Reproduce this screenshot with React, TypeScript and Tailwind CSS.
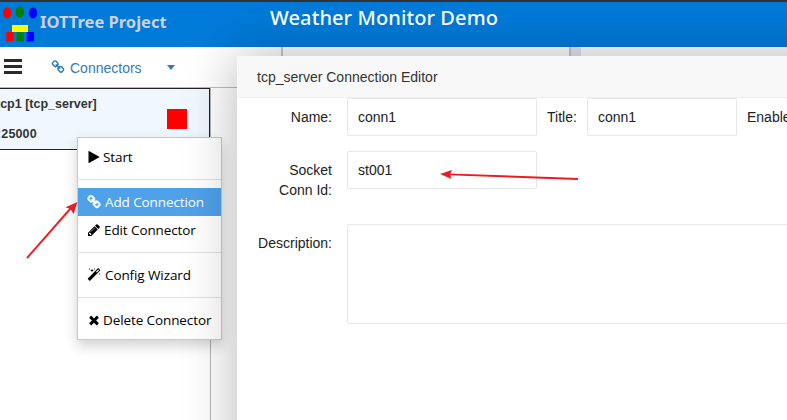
import React from "react";

const ICONS = {
  link: "M1520 1216q0-40-28-68l-208-208q-28-28-68-28-42 0-72 32 3 3 19 18.5t21.5 21.5 15 19 13 25.5 3.5 27.5q0 40-28 68t-68 28q-15 0-27.5-3.5t-25.5-13-19-15-21.5-21.5-18.5-19q-33 31-33 73 0 40 28 68l206 207q27 27 68 27 40 0 68-26l147-146q28-28 28-67zm-703-705q0-40-28-68l-206-207q-28-28-68-28-39 0-68 27l-147 146q-28 28-28 67 0 40 28 68l208 208q27 27 68 27 42 0 72-31-3-3-19-18.5t-21.5-21.5-15-19-13-25.5-3.5-27.5q0-40 28-68t68-28q15 0 27.5 3.5t25.5 13 19 15 21.5 21.5 18.5 19q33-31 33-73zm895 705q0 120-85 203l-147 146q-83 83-203 83-121 0-204-85l-206-207q-83-83-83-203 0-123 88-209l-88-88q-86 88-208 88-120 0-204-84l-208-208q-84-84-84-204t85-203l147-146q83-83 203-83 121 0 204 85l206 207q83 83 83 203 0 123-88 209l88 88q86-88 208-88 120 0 204 84l208 208q84 84 84 204z",
  pencil: "M491 1536l91-91-235-235-91 91v107h128v128h107zm523-928q0-22-22-22-10 0-17 7l-542 542q-7 7-7 17 0 22 22 22 10 0 17-7l542-542q7-7 7-17zm-54-192l416 416-832 832h-416v-416zm683 96q0 53-37 90l-166 166-416-416 166-165q36-38 90-38 53 0 91 38l235 234q37 39 37 91z",
  times: "M1490 1322q0 40-28 68l-136 136q-28 28-68 28t-68-28l-294-294-294 294q-28 28-68 28t-68-28l-136-136q-28-28-28-68t28-68l294-294-294-294q-28-28-28-68t28-68l136-136q28-28 68-28t68 28l294 294 294-294q28-28 68-28t68 28l136 136q28 28 28 68t-28 68l-294 294 294 294q28 28 28 68z",
  play: "M1576 927l-1328 738q-23 13-39.5 3t-16.5-36v-1472q0-26 16.5-36t39.5 3l1328 738q23 13 23 31t-23 31z",
  magic: "M1254 581l293-293-107-107-293 293zm447-293q0 27-18 45l-1286 1286q-18 18-45 18t-45-18l-198-198q-18-18-18-45t18-45l1286-1286q18-18 45-18t45 18l198 198q18 18 18 45zm-1351-190l98 30-98 30-30 98-30-98-98-30 98-30 30-98zm350 162l196 60-196 60-60 196-60-196-196-60 196-60 60-196zm930 478l98 30-98 30-30 98-30-98-98-30 98-30 30-98zm-640-640l98 30-98 30-30 98-30-98-98-30 98-30 30-98z",
};

function Icon({ name, className = "" }: { name: keyof typeof ICONS; className?: string }) {
  return (
    <svg viewBox="0 0 1792 1792" fill="currentColor" className={`size-[14px] shrink-0 ${className}`}>
      <path d={ICONS[name]} />
    </svg>
  );
}

function Logo() {
  return (
    <svg viewBox="0 0 36 38" className="ml-[2px] mt-[3px] h-[38px] w-[36px] shrink-0">
      <g stroke="#3d7f9c" strokeWidth="0.7" fill="none">
        <path d="M9 11l3 12M18 10v14M28 12l-4 10" />
      </g>
      <ellipse cx="5.3" cy="8" rx="4.2" ry="5.4" fill="#f00" />
      <ellipse cx="17.8" cy="7" rx="4.2" ry="5.5" fill="#008000" />
      <ellipse cx="31" cy="8" rx="4.2" ry="5.4" fill="#00f" />
      <rect x="4.3" y="27" width="7.4" height="9.5" fill="#f00" />
      <rect x="14.5" y="27" width="7.4" height="9.5" fill="#008000" />
      <rect x="24.7" y="27" width="7.4" height="9.5" fill="#00f" />
      <rect x="10" y="20" width="16" height="7" fill="#ff0" />
    </svg>
  );
}

function Header() {
  return (
    <header className="flex h-[47px] shrink-0 border-t-2 border-[#2f3438] bg-[#007ad9] font-['Noto_Sans',sans-serif]">
      <Logo />
      <div className="ml-[2px] w-[230px] shrink-0 pt-[8px] text-[16.5px] leading-[24px] font-bold text-[#cfd0da]">
        IOTTree Project
      </div>
      <div className="pt-[2px] text-[20px] leading-[28px] font-medium tracking-[0.1px] whitespace-nowrap text-white">Weather Monitor Demo</div>
    </header>
  );
}

function Toolbar() {
  return (
    <div className="flex h-[41px] w-[281px] shrink-0 items-center border-b border-[#bbb] pb-px text-[#337ab7]">
      <div className="ml-1 flex w-[18px] flex-col gap-[3px]">
        <span className="h-[3px] bg-[#2b2b2b]" />
        <span className="h-[3px] bg-[#2b2b2b]" />
        <span className="h-[3px] bg-[#2b2b2b]" />
      </div>
      <Icon name="link" className="ml-[29px]" />
      <span className="ml-[5px] pt-[3px] text-sm leading-5">Connectors</span>
      <span className="mt-[2px] ml-[25px] border-x-[4.5px] border-t-[5px] border-x-transparent border-t-[#337ab7]" />
    </div>
  );
}

function ConnectorCard() {
  return (
    <div className="flex h-[62px] w-[210px] justify-between border border-l-0 border-[#222] bg-[#f0f7ff] text-[12.5px] font-bold text-[#333]">
      <div className="-ml-[4px] whitespace-nowrap">
        <div className="pt-[5px] leading-[20px]">tcp1 [tcp_server]</div>
        <div className="ml-px pt-[10px] leading-[20px] tracking-[0.15px]">:25000</div>
      </div>
      <div className="mt-[20px] mr-[22px] size-[20px] bg-[#f00]" />
    </div>
  );
}

function MenuItem({ icon, label, active = false, gap = "ml-[3px]" }: { icon: keyof typeof ICONS; label: string; active?: boolean; gap?: string }) {
  return (
    <div className={`flex h-[28px] items-center pl-[9px] ${active ? "bg-[#4fa1ea] text-white" : "text-black"}`}>
      <Icon name={icon} className={active ? "stroke-current [stroke-width:90]" : ""} />
      <span className={`whitespace-nowrap ${gap}`}>{label}</span>
    </div>
  );
}

function Separator() {
  return <div className="my-[8px] h-px bg-[#e2e2e2]" />;
}

function ContextMenu() {
  return (
    <div className="absolute top-[137px] left-[77px] h-[203px] w-[145px] border border-[#c8c8c8] bg-white pt-[5px] font-['Open_Sans',sans-serif] text-[13.5px] tracking-[-0.1px] shadow-[0_6px_12px_rgba(0,0,0,0.18)]">
      <MenuItem icon="play" label="Start" gap="ml-[2px]" />
      <Separator />
      <MenuItem icon="link" label="Add Connection" active gap="ml-[4px]" />
      <MenuItem icon="pencil" label="Edit Connector" />
      <Separator />
      <MenuItem icon="magic" label="Config Wizard" gap="ml-[4px]" />
      <Separator />
      <MenuItem icon="times" label="Delete Connector" gap="ml-[2px]" />
    </div>
  );
}

function Field({ value, className }: { value: string; className: string }) {
  return (
    <div className={`h-[38px] shrink-0 rounded-[2px] border border-[#e6e6e6] pl-[10px] leading-[36px] ${className}`}>{value}</div>
  );
}

function Dialog() {
  return (
    <div className="absolute top-[56px] left-[237px] h-[500px] w-[760px] bg-white text-sm text-[#222] shadow-[1px_1px_50px_rgba(0,0,0,0.3)]">
      <div className="h-[42px] border-b border-[#eee] bg-[#f8f8f8] pl-5 leading-[42px] text-[#333]">
        tcp_server Connection Editor
      </div>
      <div className="flex h-[53px]">
        <div className="w-[110px] shrink-0 pt-[9px] pr-[15px] text-right leading-5">Name:</div>
        <Field value="conn1" className="w-[190px]" />
        <div className="w-[50px] shrink-0 pt-[9px] pl-[10px] leading-5">Title:</div>
        <Field value="conn1" className="w-[150px]" />
        <div className="pt-[9px] pl-[10px] leading-5">Enable</div>
      </div>
      <div className="flex h-[73px]">
        <div className="w-[110px] shrink-0 pt-[9px] pr-[15px] text-right leading-5">
          Socket
          <br />
          Conn Id:
        </div>
        <Field value="st001" className="w-[190px]" />
      </div>
      <div className="flex">
        <div className="w-[110px] shrink-0 pt-[9px] pr-[15px] text-right leading-5">Description:</div>
        <div className="h-[100px] w-[600px] shrink-0 rounded-[2px] border border-[#e6e6e6]" />
      </div>
    </div>
  );
}

function Arrows() {
  return (
    <svg viewBox="0 0 787 420" className="pointer-events-none absolute inset-0 h-[420px] w-[787px]">
      <g stroke="#ed1c24" strokeWidth="1.9" fill="none">
        <path d="M27 258L71 208M578 179L449 174.4" />
      </g>
      <path d="M77.5 202L73.5 214L70.5 209L65.5 207.2Z" fill="#ed1c24" />
      <path d="M440 174L452 170L450 174.4L451.5 179Z" fill="#ed1c24" />
    </svg>
  );
}

export default function App() {
  return (
    <div className="relative flex h-[420px] w-[787px] flex-col overflow-hidden bg-white font-['Liberation_Sans',Arial,sans-serif]">
      <Header />
      <div className="flex flex-1">
        <div className="flex w-[281px] shrink-0 flex-col">
          <Toolbar />
          <div className="flex-1">
            <div className="h-full w-[211px] border-r border-[#b5b5b5]">
              <ConnectorCard />
            </div>
          </div>
        </div>
        <div className="w-[290px] border-x-2 border-[#c8c8c8]" />
        <div className="w-[10px] bg-[#e5e7ed]" />
      </div>
      <ContextMenu />
      <Dialog />
      <Arrows />
    </div>
  );
}
